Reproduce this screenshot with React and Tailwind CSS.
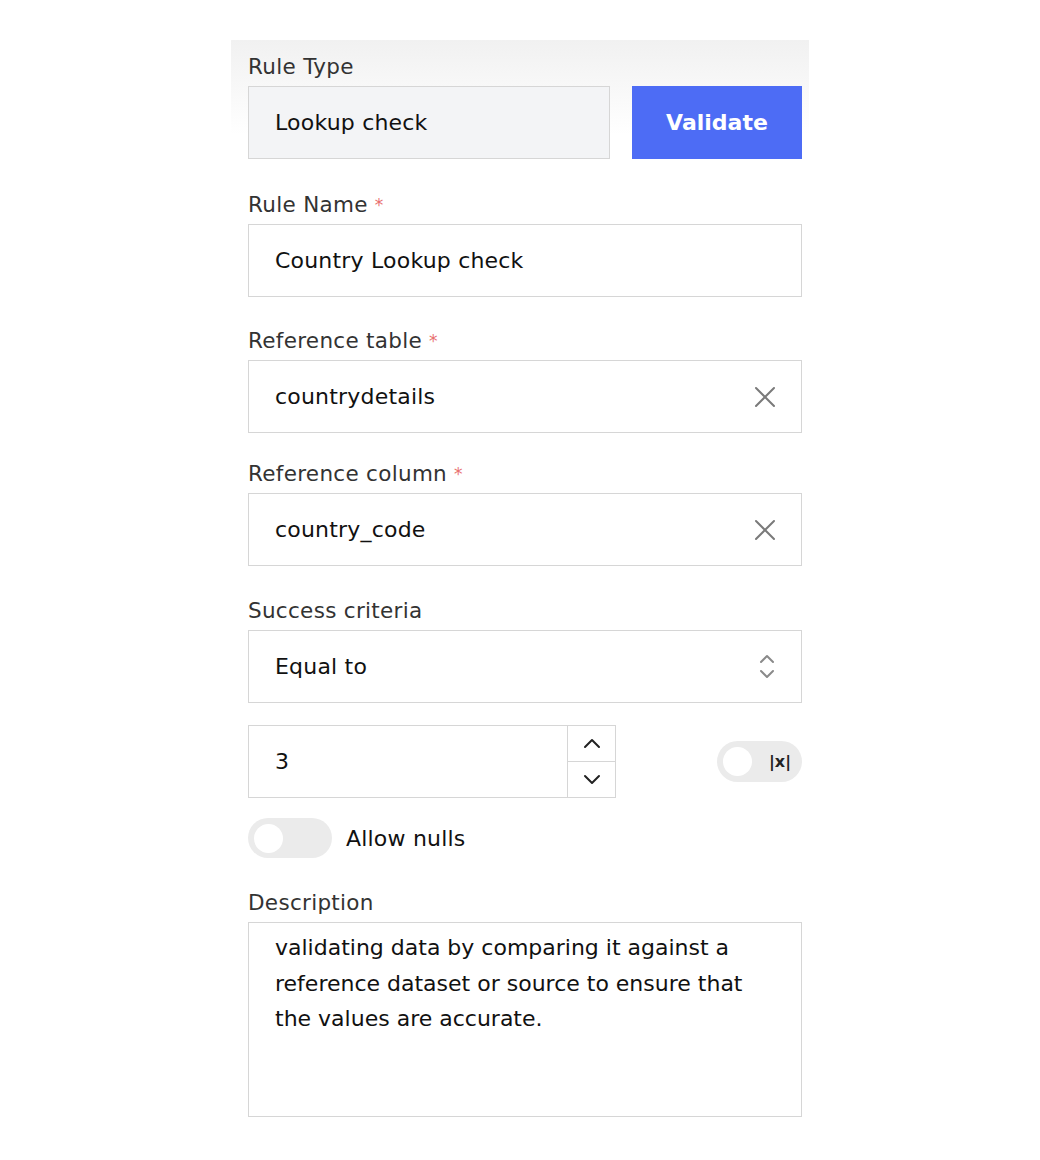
const font = { fontFamily: '"DejaVu Sans", "Noto Sans", sans-serif' }

function Label({ children, required }) {
  return (
    <div className="text-[21.5px] leading-[28px] text-[#333] mb-[5px] tracking-[0.3px]">
      {children}
      {required && <span className="text-[#e8706f] text-[17px] ml-[7px] align-top">*</span>}
    </div>
  )
}

function Box({ children, className = '' }) {
  return (
    <div className={`h-[73px] border border-[#d6d6d6] flex items-center pl-[26px] pr-[25px] text-[22px] tracking-[0.2px] text-[#111] ${className}`}>
      {children}
    </div>
  )
}

function ClearIcon() {
  return (
    <svg width="22" height="22" viewBox="0 0 22 22" fill="none" stroke="#7a7a7a" strokeWidth="2" strokeLinecap="round">
      <path d="M2 2L20 20M20 2L2 20" />
    </svg>
  )
}

function UpDownIcon() {
  return (
    <svg width="18" height="26" viewBox="0 0 18 26" fill="none" stroke="#8a8a8a" strokeWidth="2" strokeLinecap="round" strokeLinejoin="round">
      <path d="M3 8L9 2L15 8" />
      <path d="M3 17L9 23L15 17" />
    </svg>
  )
}

function Chevron({ up }) {
  return (
    <svg width="18" height="11" viewBox="0 0 18 11" fill="none" stroke="#222" strokeWidth="2" strokeLinecap="round" strokeLinejoin="round">
      {up ? <path d="M2 9L9 2L16 9" /> : <path d="M2 2L9 9L16 2" />}
    </svg>
  )
}

function Toggle({ className = '', children }) {
  return (
    <div className={`rounded-full bg-[#ebebeb] flex items-center ${className}`}>
      <div className="w-[29px] h-[29px] rounded-full bg-white ml-[6px] shrink-0" />
      {children}
    </div>
  )
}

export default function App() {
  return (
    <div className="min-h-screen bg-white pt-[40px]" style={font}>
      <div className="w-[578px] ml-[231px] bg-gradient-to-b from-[#f1f1f1] to-white to-[95px] pl-[17px] pr-[7px] pt-[13px] pb-[40px]">
        <Label>Rule Type</Label>
        <div className="flex gap-[22px]">
          <Box className="w-[362px] bg-[#f3f4f6]">Lookup check</Box>
          <button className="flex-1 h-[73px] bg-[#4d6cf5] text-white text-[22px] font-bold">Validate</button>
        </div>

        <div className="mt-[32px]">
          <Label required>Rule Name</Label>
          <Box className="bg-white">Country Lookup check</Box>
        </div>

        <div className="mt-[30px]">
          <Label required>Reference table</Label>
          <Box className="bg-white justify-between">
            <span>countrydetails</span>
            <ClearIcon />
          </Box>
        </div>

        <div className="mt-[27px]">
          <Label required>Reference column</Label>
          <Box className="bg-white justify-between">
            <span>country_code</span>
            <ClearIcon />
          </Box>
        </div>

        <div className="mt-[31px]">
          <Label>Success criteria</Label>
          <Box className="bg-white justify-between">
            <span>Equal to</span>
            <UpDownIcon />
          </Box>
        </div>

        <div className="mt-[22px] flex items-center justify-between">
          <div className="w-[368px] h-[73px] border border-[#d6d6d6] flex">
            <div className="flex-1 flex items-center pl-[26px] text-[22px] text-[#111]">3</div>
            <div className="w-[48px] border-l border-[#d6d6d6] flex flex-col">
              <div className="flex-1 flex items-center justify-center border-b border-[#d6d6d6]">
                <Chevron up />
              </div>
              <div className="flex-1 flex items-center justify-center">
                <Chevron />
              </div>
            </div>
          </div>
          <Toggle className="w-[85px] h-[41px]">
            <span className="ml-[17px] text-[16px] font-bold text-[#222]">|x|</span>
          </Toggle>
        </div>

        <div className="mt-[20px] flex items-center gap-[14px]">
          <Toggle className="w-[84px] h-[40px]" />
          <span className="text-[22px] tracking-[0.2px] text-[#111]">Allow nulls</span>
        </div>

        <div className="mt-[31px]">
          <Label>Description</Label>
          <div className="h-[195px] border border-[#d6d6d6] pl-[26px] pr-[30px] pt-[7px] text-[22px] leading-[35.5px] text-[#111]">
            validating data by comparing it against a reference dataset or source to ensure that the values are accurate.
          </div>
        </div>
      </div>
    </div>
  )
}
